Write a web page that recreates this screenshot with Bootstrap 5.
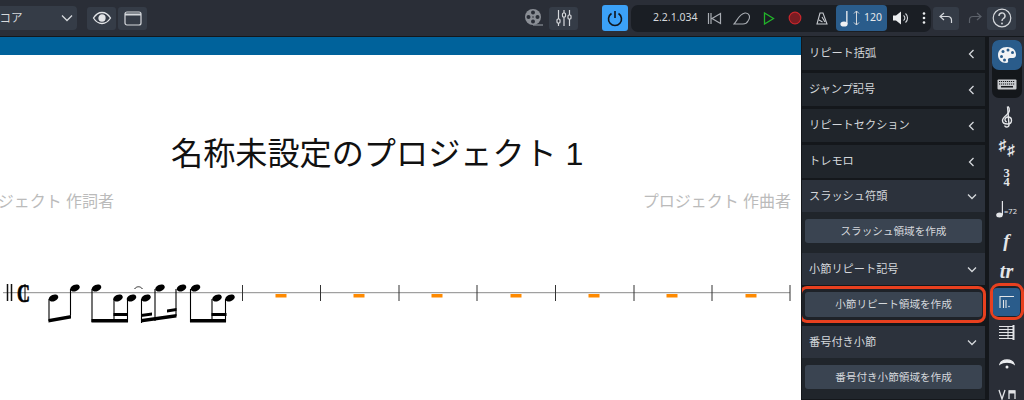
<!DOCTYPE html>
<html lang="ja">
<head>
    <meta charset="UTF-8">
    <title>Score</title>
    <link href="https://cdn.jsdelivr.net/npm/bootstrap@5.3.0/dist/css/bootstrap.min.css" rel="stylesheet">
    <style>
        html, body { width: 1024px; height: 400px; overflow: hidden; background: #fff; }
        body { font-family: "Noto Sans", "Noto Sans CJK JP", sans-serif; color: #d5d8dc; }
        .top-bar { height: 37px; background: #2a2e37; border-bottom: 1px solid #14171b; padding-left: 0; }
        .mode-select { width: 77px; height: 24px; background: #353c47; border-radius: 0 4px 4px 0; font-size: 11.5px; color: #d5d8dc; overflow: hidden; padding: 0 4px 0 0; }
        .mode-select span { margin-left: -12px; white-space: nowrap; }
        .tool-btn { width: 29px; height: 23px; background: #353c47; border-radius: 3px; }
        .power-btn { width: 26px; height: 26px; background: #3ba1f7; border-radius: 3px; margin-left: 24px; }
        .transport { width: 300px; height: 27px; background: #1a1e24; border-radius: 7px; margin-left: 3px; margin-right: 2px; padding-left: 22px; }
        .time-text { font-size: 10.5px; width: 43px; color: #d5d8dc; margin-right: 10px; white-space: nowrap; }
        .tempo-box { width: 51px; height: 26px; background: #2a5c8b; border-radius: 4px; font-size: 10.5px; color: #e4e7ea; }
        .score-area { width: 801px; height: 363px; background: #fff; overflow: hidden; }
        .blue-strip { height: 18px; background: #00629b; }
        .score-title { font-family: "Liberation Sans", "Noto Sans CJK JP", sans-serif; font-size: 32.15px; line-height: 40px; color: #111; margin-top: 79px; padding-left: 171px; margin-bottom: 0; font-weight: 400; height: 40px; white-space: nowrap; }
        .credit-row { height: 24px; margin-top: 15px; font-size: 16px; line-height: 24px; color: #bbbbbb; padding-right: 10px; white-space: nowrap; }
        .credit-left { width: 114px; overflow: hidden; }
        .staff-svg { display: block; margin-top: 57px; }
        .palette-panel { width: 187px; height: 363px; background: #14171b; padding: 0 3px 0 0; border-left: 1px solid #14171b; overflow: hidden; }
        .section-row { height: 33px; margin-bottom: 3px; background: #20252b; font-size: 11.2px; padding: 0 10px 0 7px; white-space: nowrap; }
        .section-open { background: #2c323c; margin-bottom: 0; height: 32px; padding-right: 8px; }
        .first-open { margin-top: -1px; }
        .section-body { background: #20252b; height: 41px; padding: 6.5px 3px 0 3px; }
        .create-btn { height: 24.5px; width: 177px; background: #3a4451; border: 0; border-radius: 3px; font-size: 10.6px; color: #d5d8dc; padding: 0; line-height: 24px; white-space: nowrap; }
        .ring-wrap { margin: 1px -1px 3px -3px; height: 37px; border: 3px solid #e8401f; border-radius: 8px; padding: 3px 3px 0 3px; background: #1e2228; }
        .side-bar { width: 36px; height: 363px; background: #2a2e37; border-left: 1px solid #14171b; overflow: hidden; }
        .side-group { width: 30px; height: 58px; background: #14171b; border-radius: 7px; margin: 3px 0 2.5px; flex-shrink: 0; }
        .side-active { width: 30px; height: 30px; background: #2a5c8b; border-radius: 7px; }
        .side-item { width: 30px; height: 31px; color: #e3e5e8; white-space: nowrap; flex-shrink: 0; }
        .ring-side { width: 34px; height: 37px; border: 3px solid #e8401f; border-radius: 9px; margin: -3.5px 0; background: #1e2228; flex-shrink: 0; }
        .ring-side div { width: 27px; height: 28px; background: #2a5c8b; border-radius: 4px; }
        .serif-ico { font-family: "Liberation Serif", serif; font-weight: 700; line-height: 1; }
    </style>
</head>
<body>
    <!-- toolbar -->
    <div class="top-bar d-flex align-items-center">
        <div class="mode-select d-flex align-items-center justify-content-between">
            <span>スコア</span>
            <svg width="12" height="8" viewBox="0 0 12 8" fill="none" stroke="#d5d8dc" stroke-width="1.3"><path d="M1 1.500l5 5 5-5"/></svg>
        </div>
        <div class="tool-btn d-flex align-items-center justify-content-center" style="margin-left:10px">
            <svg width="20" height="14" viewBox="0 0 20 14" fill="none" stroke="#e3e5e8" stroke-width="1.3"><path d="M1.500 7C4 3 7 1.500 10 1.500S16 3 18.500 7C16 11 13 12.500 10 12.500S4 11 1.500 7z"/><circle cx="10" cy="7" r="3" fill="#e3e5e8"/></svg>
        </div>
        <div class="tool-btn d-flex align-items-center justify-content-center" style="margin-left:2px">
            <svg width="18" height="15" viewBox="0 0 18 15" fill="none" stroke="#d5d8dc" stroke-width="1.2"><rect x="1" y="1" width="16" height="13" rx="2"/><path d="M1 3.500h16" stroke-width="2"/></svg>
        </div>
        <div class="d-flex align-items-center justify-content-center" style="width:29px;margin-left:372px">
            <svg width="20" height="20" viewBox="0 0 20 20" fill="#8b8f96"><circle cx="9" cy="9" r="8"/><g fill="#2a2e37"><circle cx="9" cy="4.500" r="2"/><circle cx="9" cy="13.500" r="2"/><circle cx="4.500" cy="9" r="2"/><circle cx="13.500" cy="9" r="2"/><circle cx="9" cy="9" r=".8"/></g><path d="M9 17h10" stroke="#8b8f96" stroke-width="1.200"/></svg>
        </div>
        <div class="tool-btn d-flex align-items-center justify-content-center" style="margin-left:1px">
            <svg width="18" height="18" viewBox="0 0 18 18" stroke="#d5d8dc" stroke-width="1.2" fill="#2a2e37"><path d="M3.500 1v16M9 1v16M14.500 1v16"/><rect x="2" y="10" width="3" height="4" rx="1"/><rect x="7.500" y="4" width="3" height="4" rx="1"/><rect x="13" y="6" width="3" height="4" rx="1"/></svg>
        </div>
        <div class="power-btn d-flex align-items-center justify-content-center">
            <svg width="16" height="17" viewBox="0 0 16 17" fill="none" stroke="#10151b" stroke-width="1.600"><path d="M4.500 3.500a6.500 6.500 0 1 0 7 0M8 1v7"/></svg>
        </div>
        <div class="transport d-flex align-items-center">
            <div class="time-text">2.2.1.034</div>
            <svg width="15" height="13" viewBox="0 0 15 13" fill="none" stroke="#a9adb3" stroke-width="1.200" class="me-2" style="margin-left:1px"><path d="M1.500 1v11M4 1v11M13.500 1.500v10L5 6.500z"/></svg>
            <svg width="18" height="13" viewBox="0 0 18 13" fill="none" stroke="#a9adb3" stroke-width="1.100" style="margin-left:3px"><path d="M1 12C4 9 6 2 12 1c4-.5 6 4 3 8-1 2-3 3-5 3z"/></svg>
            <svg width="12" height="13" viewBox="0 0 12 13" fill="none" stroke="#22b32a" stroke-width="1.300" style="margin-left:12px"><path d="M1.500 1v11l9-5.500z"/></svg>
            <svg width="14" height="14" viewBox="0 0 14 14" fill="#7a1c22" stroke="#c8262c" stroke-width="1.200" style="margin-left:13px"><circle cx="7" cy="7" r="5.800"/></svg>
            <svg width="12" height="13" viewBox="0 0 12 13" fill="none" stroke="#c6c9ce" stroke-width="1.100" style="margin-left:14px"><path d="M4 1h3l4 11H1zM3 8l3.500 2M6 5l3 5"/></svg>
            <div class="tempo-box d-flex align-items-center" style="margin-left:8px;padding-left:4px">
                <svg width="9" height="17" viewBox="0 0 9 17" fill="#f0f1f3"><ellipse cx="4" cy="14" rx="3.600" ry="2.600"/><rect x="6.200" y="1" width="1.300" height="13"/></svg>
                <svg width="7" height="16" viewBox="0 0 7 16" fill="none" stroke="#d5d8dc" stroke-width="1" style="margin-left:4px"><path d="M3.500 1v14M1 3.500L3.500 1 6 3.500M1 12.500L3.500 15 6 12.500"/></svg>
                <span style="margin-left:4px">120</span>
            </div>
            <svg width="17" height="14" viewBox="0 0 17 14" fill="none" style="margin-left:6px"><path d="M0 4.500h3L8 .5v13l-5-4H0z" fill="#eceef0"/><path d="M10.500 4.500a3 3 0 0 1 0 5M12.500 2.500a6 6 0 0 1 0 9" stroke="#d5d8dc" stroke-width="1.100"/></svg>
            <svg width="4" height="12" viewBox="0 0 4 12" fill="#eceef0" style="margin-left:12px"><circle cx="2" cy="1.500" r="1.300"/><circle cx="2" cy="6" r="1.300"/><circle cx="2" cy="10.500" r="1.300"/></svg>
        </div>
        <div class="tool-btn d-flex align-items-center justify-content-center" style="width:26px">
            <svg width="14" height="12" viewBox="0 0 14 12" fill="none" stroke="#d5d8dc" stroke-width="1.200"><path d="M5 1L1 4.500 5 8M1 4.500h8a3.500 3.500 0 0 1 3.500 3.500v3"/></svg>
        </div>
        <svg width="14" height="12" viewBox="0 0 14 12" fill="none" stroke="#5c616a" stroke-width="1.200" style="margin-left:9px"><path d="M9 1l4 3.500L9 8M13 4.500H5A3.500 3.500 0 0 0 1.500 8v3"/></svg>
        <div class="tool-btn d-flex align-items-center justify-content-center" style="margin-left:5px">
            <svg width="20" height="20" viewBox="0 0 20 20" fill="none" stroke="#d5d8dc" stroke-width="1.200"><circle cx="10" cy="10" r="8.800"/><path d="M7 8a3 3 0 1 1 4.500 2.500c-1 .6-1.500 1.200-1.500 2.500" stroke-width="1.400"/><circle cx="10" cy="15.500" r=".9" fill="#d5d8dc" stroke="none"/></svg>
        </div>
    </div>

    <div class="d-flex">
        <!-- score -->
        <div class="score-area flex-shrink-0">
            <div class="blue-strip"></div>
            <h1 class="score-title">名称未設定のプロジェクト 1</h1>
            <div class="credit-row d-flex justify-content-between">
                <div class="credit-left d-flex justify-content-end"><span>プロジェクト 作詞者</span></div>
                <div>プロジェクト 作曲者</div>
            </div>
            <svg class="staff-svg" width="801" height="60" viewBox="0 270 801 60">
                <path d="M3 292.700H790" stroke="#8a8a8a" stroke-width="1"/>
                <path d="M242.500 285v16M320.500 285v16M399 285v16M477 285v16M555.500 285v16M634 285v16M712 285v16M790 285v16" stroke="#333" stroke-width="1"/>
                <path d="M7.500 284v17M11.500 284v17" stroke="#111" stroke-width="1.500"/>
                <text x="17" y="302" font-family="Liberation Serif" font-weight="700" font-size="26" textLength="13" lengthAdjust="spacingAndGlyphs" fill="#000" stroke="#000" stroke-width=".7">C</text>
                <path d="M25 284v18" stroke="#000" stroke-width="1"/>
                <g fill="#ff8a00">
                    <rect x="275.500" y="294" width="11" height="3.500"/><rect x="353.500" y="294" width="11" height="3.500"/><rect x="431.500" y="294" width="11" height="3.500"/><rect x="510.500" y="294" width="11" height="3.500"/><rect x="588.500" y="294" width="11" height="3.500"/><rect x="666.500" y="294" width="11" height="3.500"/><rect x="745.500" y="294" width="11" height="3.500"/>
                </g>
                <g fill="#000">
                    <ellipse cx="53.500" cy="298" rx="5" ry="3.300" transform="rotate(-22 53.500 298)"/>
                    <ellipse cx="75" cy="288" rx="5" ry="3.300" transform="rotate(-22 75 288)"/>
                    <ellipse cx="96.500" cy="288" rx="5" ry="3.300" transform="rotate(-22 96.500 288)"/>
                    <ellipse cx="118" cy="298" rx="5" ry="3.300" transform="rotate(-22 118 298)"/>
                    <ellipse cx="131.500" cy="298" rx="5" ry="3.300" transform="rotate(-22 131.500 298)"/>
                    <ellipse cx="146" cy="298" rx="5" ry="3.300" transform="rotate(-22 146 298)"/>
                    <ellipse cx="160" cy="288" rx="5" ry="3.300" transform="rotate(-22 160 288)"/>
                    <ellipse cx="181.500" cy="288" rx="5" ry="3.300" transform="rotate(-22 181.500 288)"/>
                    <ellipse cx="195.500" cy="288" rx="5" ry="3.300" transform="rotate(-22 195.500 288)"/>
                    <ellipse cx="217" cy="298" rx="5" ry="3.300" transform="rotate(-22 217 298)"/>
                    <ellipse cx="230" cy="298" rx="5" ry="3.300" transform="rotate(-22 230 298)"/>
                </g>
                <path d="M49 299v22M70.500 289v26M92 289v33M114 299v23M127.500 299v23M141.500 299v24M155 289v32M176 289v27M190.500 289v33M212 299v23M225.500 299v23" stroke="#000" stroke-width="1.100"/>
                <path d="M48.500 319L71 315v3.500l-22.500 4zM91.500 319h36.500v3.500h-36.500zM113.500 313h14.500v3h-14.500zM141 319L176.500 314v3.500L141 322.500zM141 314L152 312.500v3L141 317zM167 309.500L176.500 308v3L167 312.500zM190 319h36v3.500h-36zM211.500 313h15v3h-15z" fill="#000"/>
                <path d="M134.500 289c2-3 6-3 8 0" fill="none" stroke="#000" stroke-width=".8"/>
            </svg>
        </div>

        <!-- palette panel -->
        <div class="palette-panel flex-shrink-0">
            <div class="section-row d-flex align-items-center justify-content-between"><span>リピート括弧</span><svg width="7" height="10" viewBox="0 0 7 10" fill="none" stroke="#d5d8dc" stroke-width="1.300"><path d="M5.500 1L1.500 5l4 4"/></svg></div>
            <div class="section-row d-flex align-items-center justify-content-between"><span>ジャンプ記号</span><svg width="7" height="10" viewBox="0 0 7 10" fill="none" stroke="#d5d8dc" stroke-width="1.300"><path d="M5.500 1L1.500 5l4 4"/></svg></div>
            <div class="section-row d-flex align-items-center justify-content-between"><span>リピートセクション</span><svg width="7" height="10" viewBox="0 0 7 10" fill="none" stroke="#d5d8dc" stroke-width="1.300"><path d="M5.500 1L1.500 5l4 4"/></svg></div>
            <div class="section-row d-flex align-items-center justify-content-between"><span>トレモロ</span><svg width="7" height="10" viewBox="0 0 7 10" fill="none" stroke="#d5d8dc" stroke-width="1.300"><path d="M5.500 1L1.500 5l4 4"/></svg></div>
            <div class="section-row section-open first-open d-flex align-items-center justify-content-between"><span>スラッシュ符頭</span><svg width="10" height="7" viewBox="0 0 10 7" fill="none" stroke="#d5d8dc" stroke-width="1.300"><path d="M1 1.500l4 4 4-4"/></svg></div>
            <div class="section-body"><button class="btn create-btn d-block">スラッシュ領域を作成</button></div>
            <div class="section-row section-open d-flex align-items-center justify-content-between"><span>小節リピート記号</span><svg width="10" height="7" viewBox="0 0 10 7" fill="none" stroke="#d5d8dc" stroke-width="1.300"><path d="M1 1.500l4 4 4-4"/></svg></div>
            <div class="ring-wrap"><button class="btn create-btn d-block">小節リピート領域を作成</button></div>
            <div class="section-row section-open d-flex align-items-center justify-content-between"><span>番号付き小節</span><svg width="10" height="7" viewBox="0 0 10 7" fill="none" stroke="#d5d8dc" stroke-width="1.300"><path d="M1 1.500l4 4 4-4"/></svg></div>
            <div class="section-body"><button class="btn create-btn d-block">番号付き小節領域を作成</button></div>
        </div>

        <!-- element icons -->
        <div class="side-bar flex-shrink-0 d-flex flex-column align-items-center">
            <div class="side-group">
                <div class="side-active d-flex align-items-center justify-content-center">
                    <svg width="20" height="18" viewBox="0 0 20 18"><path d="M10 1C4.500 1 1 4.500 1 9s3.500 8 8 8c2 0 2.500-1 2-2.500-.5-1.500.5-2.500 2-2.500h3c2 0 3-1.500 3-3.500C19 4 15.500 1 10 1z" fill="#f2f3f5"/><g fill="#2a5c8b"><circle cx="6" cy="5.500" r="1.500"/><circle cx="11" cy="4" r="1.500"/><circle cx="15.500" cy="6.500" r="1.500"/><circle cx="4.500" cy="10.500" r="1.500"/><circle cx="7.500" cy="14" r="1.500"/></g></svg>
                </div>
                <div class="d-flex align-items-center justify-content-center" style="height:28px">
                    <svg width="20" height="11" viewBox="0 0 20 11"><rect x=".5" y=".5" width="19" height="10" rx="1" fill="#c9cbcf"/><path d="M2 2.500h16M2 5h16" stroke="#14171b" stroke-width="1" stroke-dasharray="1.200 .8"/><rect x="4" y="7" width="12" height="1.500" fill="#14171b"/></svg>
                </div>
            </div>
            <div class="side-item d-flex align-items-center justify-content-center">
                <svg width="12" height="23" viewBox="0 0 12 23" fill="none" stroke="#e3e5e8" stroke-width="1.400"><path d="M7 1.500C9.500 4 8.500 7.500 5.500 10 3 12 1.500 13.500 1.500 15.500c0 2.500 2.500 3.500 5 3.500s4-1.500 4-3.500-1.500-3.500-3.500-3.500-3.200 1.500-3 3c.1 1 1 1.700 1.800 1.800"/><path d="M6.500 1.500L8 19.500c.2 2-1.200 2.500-2.500 2.500-1 0-1.700-.7-1.700-1.500"/></svg>
            </div>
            <div class="side-item d-flex justify-content-center serif-ico" style="font-size:15px;padding-top:6px;gap:1px">
                <span>♯</span><span style="margin-top:5px">♯</span>
            </div>
            <div class="side-item d-flex flex-column align-items-center justify-content-center serif-ico" style="font-size:12.5px;line-height:9px">
                <span>3</span><span>4</span>
            </div>
            <div class="side-item d-flex align-items-center justify-content-center" style="font-size:7.500px">
                <svg width="8" height="18" viewBox="0 0 8 18" fill="#e3e5e8"><ellipse cx="3.500" cy="15" rx="3.300" ry="2.500"/><rect x="5.800" y="1" width="1.200" height="14"/></svg><span class="align-self-end" style="padding-bottom:7px">=72</span>
            </div>
            <div class="side-item d-flex align-items-center justify-content-center serif-ico fst-italic" style="font-size:19px">f</div>
            <div class="side-item d-flex align-items-center justify-content-center serif-ico fst-italic" style="font-size:20px">tr</div>
            <div class="ring-side d-flex align-items-center justify-content-center">
                <div class="d-flex align-items-center justify-content-center">
                    <svg width="16" height="13" viewBox="0 0 16 13" fill="none" stroke="#e3e5e8" stroke-width="1.100"><path d="M1 13V1.500h14M4.500 13V5M7 13V5"/><circle cx="10" cy="11.500" r=".8" fill="#e3e5e8" stroke="none"/></svg>
                </div>
            </div>
            <div class="side-item d-flex align-items-center justify-content-center">
                <svg width="16" height="15" viewBox="0 0 16 15" fill="none" stroke="#e3e5e8" stroke-width="1"><path d="M0 1.500h14M0 4.500h14M0 7.500h14M0 10.500h14M0 13.500h14M9 1v13"/><path d="M14.500 0v15" stroke-width="2"/></svg>
            </div>
            <div class="side-item d-flex align-items-center justify-content-center">
                <svg width="16" height="12" viewBox="0 0 16 12"><path d="M1 7C3 1.500 13 1.500 15 7 12 4.500 4 4.500 1 7z" fill="#eceef0" stroke="#eceef0" stroke-width="1.200"/><circle cx="8" cy="10" r="1.500" fill="#eceef0"/></svg>
            </div>
            <div class="side-item d-flex align-items-center justify-content-center">
                <svg width="18" height="11" viewBox="0 0 18 11" fill="none" stroke="#e3e5e8" stroke-width="1.300"><path d="M1 1l3 9 3-9M11 10V2h6v8"/><path d="M11 3h6" stroke-width="3"/></svg>
            </div>
        </div>
    </div>

    <script src="https://cdn.jsdelivr.net/npm/bootstrap@5.3.0/dist/js/bootstrap.bundle.min.js"></script>
</body>
</html>
